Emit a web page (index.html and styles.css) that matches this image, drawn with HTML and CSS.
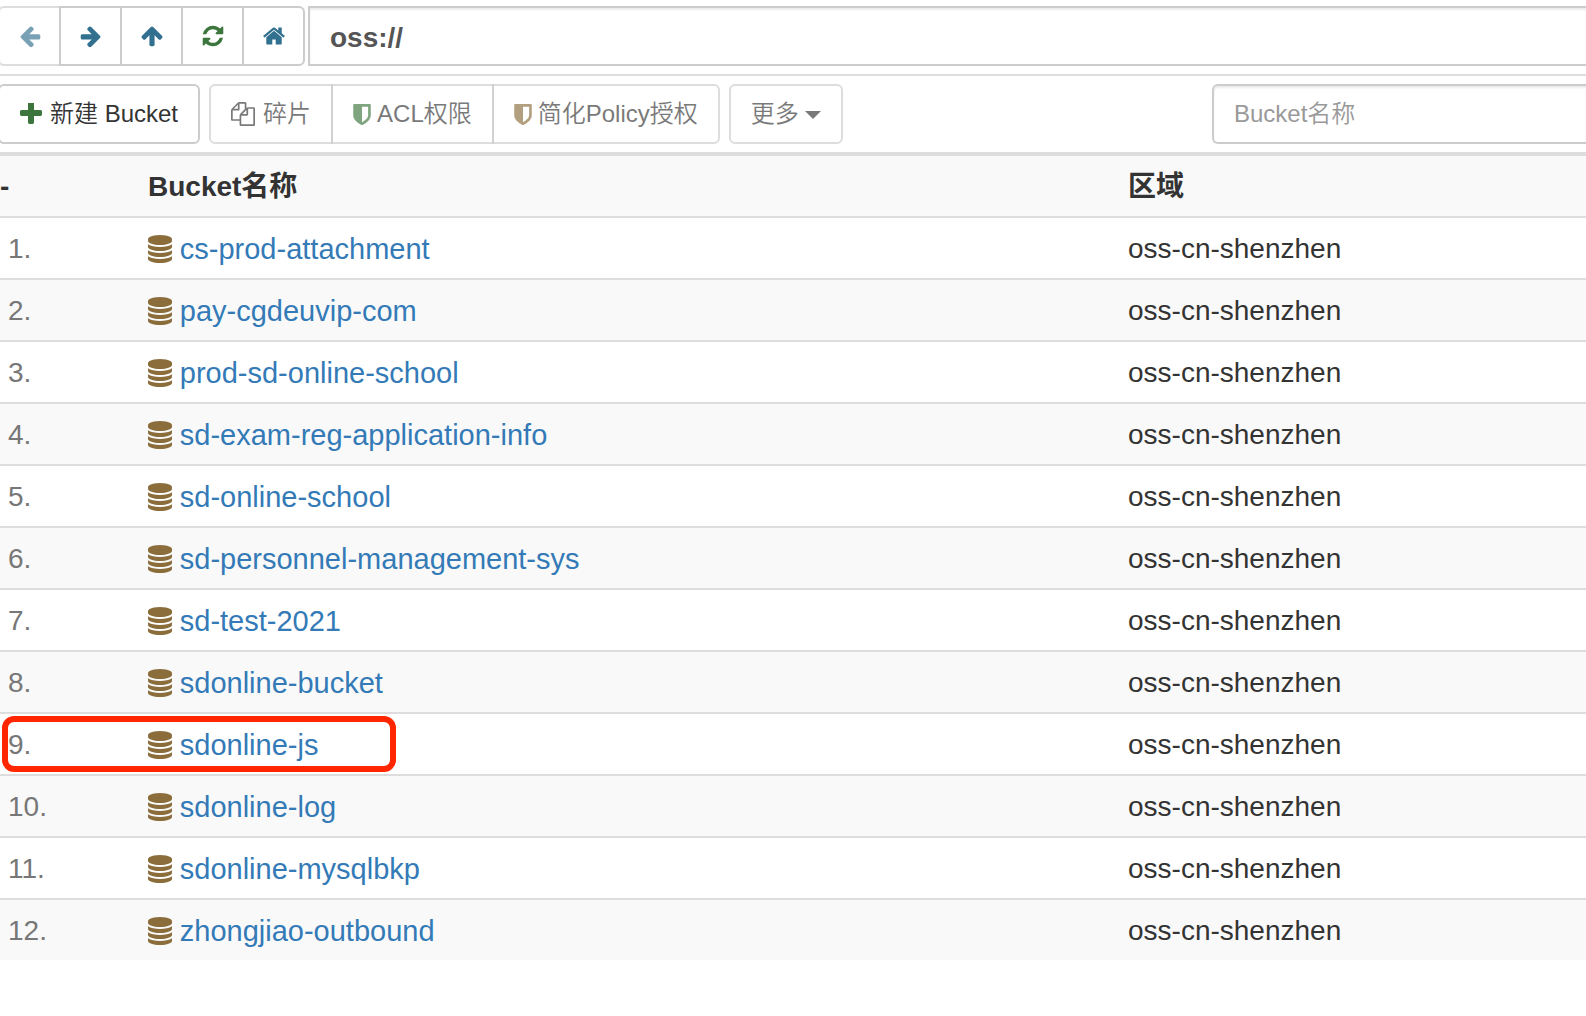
FILE: index.html
```html
<!DOCTYPE html>
<html lang="zh-CN">
<head>
<meta charset="utf-8">
<title>OSS Browser</title>
<link rel="stylesheet" href="styles.css">
</head>
<body>
<svg class="sprite" aria-hidden="true">
  <symbol id="database" viewBox="128 0 1536 1792"><path d="M896 768q237 0 443-43t325-127v170q0 69-103 128t-280 93.500-385 34.500-385-34.500-280-93.500-103-128v-170q119 84 325 127t443 43zm0 768q237 0 443-43t325-127v170q0 69-103 128t-280 93.500-385 34.500-385-34.500-280-93.500-103-128v-170q119 84 325 127t443 43zm0-384q237 0 443-43t325-127v170q0 69-103 128t-280 93.500-385 34.500-385-34.500-280-93.500-103-128v-170q119 84 325 127t443 43zm0-1152q208 0 385 34.500t280 93.500 103 128v128q0 69-103 128t-280 93.500-385 34.500-385-34.500-280-93.500-103-128v-128q0-69 103-128t280-93.500 385-34.500z"/></symbol>
  <symbol id="shield" viewBox="256 128 1280 1536"><path d="M1344 960v-640h-448v1137q119-63 213-137 235-184 235-360zm192-768v768q0 86-33.500 170.500t-83 150-118 127.500-126.500 103-121 77.500-89.500 49.500-42.500 20q-12 6-26 6t-26-6q-16-7-42.500-20t-89.500-49.500-121-77.500-126.500-103-118-127.500-83-150-33.500-170.500v-768q0-26 19-45t45-19h1152q26 0 45 19t19 45z"/></symbol>
</svg>

<nav class="navbar">
  <div class="btn-group">
    <button class="btn nav-btn" type="button" aria-label="后退" disabled>
      <svg class="icon blue" viewBox="0 0 1792 1792"><path d="M1664 896v128q0 53-32.500 90.500t-84.500 37.500h-704l293 294q38 36 38 90t-38 90l-75 76q-37 37-90 37-52 0-91-37l-651-652q-37-37-37-90 0-52 37-91l651-650q38-38 91-38 52 0 90 38l75 74q38 38 38 91t-38 91l-293 293h704q52 0 84.500 37.500t32.500 90.500z"/></svg>
    </button>
    <button class="btn nav-btn" type="button" aria-label="前进">
      <svg class="icon blue" viewBox="0 0 1792 1792"><path d="M1600 960q0 54-37 91l-651 651q-39 37-91 37-51 0-90-37l-75-75q-38-38-38-91t38-91l293-293h-704q-52 0-84.500-37.500t-32.500-90.500v-128q0-53 32.500-90.500t84.500-37.500h704l-293-294q-38-36-38-90t38-90l75-75q38-38 90-38 53 0 91 38l651 651q37 35 37 90z"/></svg>
    </button>
    <button class="btn nav-btn" type="button" aria-label="上一级">
      <svg class="icon blue" viewBox="0 0 1792 1792"><path d="M1675 971q0 51-37 90l-75 75q-38 38-91 38-54 0-90-38l-294-293v704q0 52-37.500 84.500t-90.500 32.500h-128q-53 0-90.500-32.500t-37.500-84.500v-704l-294 293q-36 38-90 38t-90-38l-75-75q-38-38-38-90 0-53 38-91l651-651q35-37 90-37 54 0 91 37l651 651q37 39 37 91z"/></svg>
    </button>
    <button class="btn nav-btn" type="button" aria-label="刷新">
      <svg class="icon green" viewBox="0 0 1792 1792"><path d="M1639 1056q0 5-1 7-64 268-268 434.500t-478 166.500q-146 0-282.500-55t-243.500-157l-129 129q-19 19-45 19t-45-19-19-45v-448q0-26 19-45t45-19h448q26 0 45 19t19 45-19 45l-137 137q71 66 161 102t187 36q134 0 250-65t186-179q11-17 53-117 8-23 30-23h192q13 0 22.500 9.500t9.500 22.500zm25-800v448q0 26-19 45t-45 19h-448q-26 0-45-19t-19-45 19-45l138-138q-148-137-349-137-134 0-250 65t-186 179q-11 17-53 117-8 23-30 23h-199q-13 0-22.500-9.500t-9.500-22.500v-7q65-268 270-434.500t480-166.500q146 0 284 55.500t245 156.500l130-129q19-19 45-19t45 19 19 45z"/></svg>
    </button>
    <button class="btn nav-btn" type="button" aria-label="主页">
      <svg class="icon blue" viewBox="0 0 1792 1792"><path d="M1472 992v480q0 26-19 45t-45 19h-384v-384h-256v384h-384q-26 0-45-19t-19-45v-480q0-1 .5-3t.5-3l575-474 575 474q1 2 1 6zm223-69l-62 74q-8 9-21 11h-3q-13 0-21-7l-692-577-692 577q-12 8-24 7-13-2-21-11l-62-74q-8-10-7-23.500t11-21.500l719-599q32-26 76-26t76 26l244 204v-195q0-14 9-23t23-9h192q14 0 23 9t9 23v408l219 182q10 8 11 21.500t-7 23.500z"/></svg>
    </button>
  </div>
  <input class="field address" type="text" value="oss://" aria-label="地址">
</nav>

<div class="toolbar">
  <button class="btn" type="button">
    <svg class="icon-plus green" viewBox="192 192 1408 1408"><path d="M1600 736v192q0 40-28 68t-68 28h-416v416q0 40-28 68t-68 28h-192q-40 0-68-28t-28-68v-416h-416q-40 0-68-28t-28-68v-192q0-40 28-68t68-28h416v-416q0-40 28-68t68-28h192q40 0 68 28t28 68v416h416q40 0 68 28t28 68z"/></svg>
    <span>新建 Bucket</span>
  </button>
  <div class="btn-group">
    <button class="btn" type="button" disabled>
      <svg class="icon" viewBox="0 0 1792 1792"><path d="M1696 384q40 0 68 28t28 68v1216q0 40-28 68t-68 28h-960q-40 0-68-28t-28-68v-288h-544q-40 0-68-28t-28-68v-672q0-40 20-88t48-76l408-408q28-28 76-48t88-20h416q40 0 68 28t28 68v328q68-40 128-40h416zm-544 213l-299 299h299v-299zm-640-384l-299 299h299v-299zm196 647l316-316v-416h-384v416q0 40-28 68t-68 28h-416v640h512v-256q0-40 20-88t48-76zm956 804v-1152h-384v416q0 40-28 68t-68 28h-416v640h896z"/></svg>
      <span>碎片</span>
    </button>
    <button class="btn btn-tight" type="button" disabled>
      <svg class="icon-shield green"><use href="#shield"/></svg>
      <span>ACL权限</span>
    </button>
    <button class="btn btn-tight" type="button" disabled>
      <svg class="icon-shield brown"><use href="#shield"/></svg>
      <span>简化Policy授权</span>
    </button>
  </div>
  <button class="btn btn-tight" type="button" disabled>
    <span>更多</span>
    <span class="caret"></span>
  </button>
  <input class="field search" type="text" placeholder="Bucket名称" aria-label="Bucket名称">
</div>

<table class="buckets">
  <colgroup><col class="col-index"><col><col class="col-region"></colgroup>
  <thead>
    <tr><th>-</th><th>Bucket名称</th><th>区域</th></tr>
  </thead>
  <tbody>
    <tr><td>1.</td><td><svg class="db"><use href="#database"/></svg> <a href="#">cs-prod-attachment</a></td><td>oss-cn-shenzhen</td></tr>
    <tr><td>2.</td><td><svg class="db"><use href="#database"/></svg> <a href="#">pay-cgdeuvip-com</a></td><td>oss-cn-shenzhen</td></tr>
    <tr><td>3.</td><td><svg class="db"><use href="#database"/></svg> <a href="#">prod-sd-online-school</a></td><td>oss-cn-shenzhen</td></tr>
    <tr><td>4.</td><td><svg class="db"><use href="#database"/></svg> <a href="#">sd-exam-reg-application-info</a></td><td>oss-cn-shenzhen</td></tr>
    <tr><td>5.</td><td><svg class="db"><use href="#database"/></svg> <a href="#">sd-online-school</a></td><td>oss-cn-shenzhen</td></tr>
    <tr><td>6.</td><td><svg class="db"><use href="#database"/></svg> <a href="#">sd-personnel-management-sys</a></td><td>oss-cn-shenzhen</td></tr>
    <tr><td>7.</td><td><svg class="db"><use href="#database"/></svg> <a href="#">sd-test-2021</a></td><td>oss-cn-shenzhen</td></tr>
    <tr><td>8.</td><td><svg class="db"><use href="#database"/></svg> <a href="#">sdonline-bucket</a></td><td>oss-cn-shenzhen</td></tr>
    <tr class="marked"><td>9.</td><td><svg class="db"><use href="#database"/></svg> <a href="#">sdonline-js</a></td><td>oss-cn-shenzhen</td></tr>
    <tr><td>10.</td><td><svg class="db"><use href="#database"/></svg> <a href="#">sdonline-log</a></td><td>oss-cn-shenzhen</td></tr>
    <tr><td>11.</td><td><svg class="db"><use href="#database"/></svg> <a href="#">sdonline-mysqlbkp</a></td><td>oss-cn-shenzhen</td></tr>
    <tr><td>12.</td><td><svg class="db"><use href="#database"/></svg> <a href="#">zhongjiao-outbound</a></td><td>oss-cn-shenzhen</td></tr>
  </tbody>
</table>
</body>
</html>
```
FILE: styles.css
```css
*,
*::after { box-sizing: border-box; }

body {
  margin: 0;
  overflow-x: hidden;
  background: #fff;
  color: #333;
  font-family: "Liberation Sans", "Noto Sans CJK SC", sans-serif;
  font-size: 28px;
  line-height: 40px;
}

.sprite { display: none; }

/* Bars */
.navbar,
.toolbar {
  display: flex;
  margin-left: -2px;
}

.navbar {
  gap: 3px;
  padding: 6px 0 8px;
  border-bottom: 2px solid #ddd;
}

.toolbar {
  gap: 9px;
  padding: 8px 0;
  border-bottom: 4px solid #ddd;
}

/* Buttons */
.btn {
  display: flex;
  align-items: center;
  justify-content: center;
  gap: 8px;
  height: 60px;
  padding: 0 20px;
  border: 2px solid #ccc;
  border-radius: 6px;
  background: #fff;
  color: #333;
  font: 350 24px/34px "Liberation Sans", "Noto Sans CJK SC", sans-serif;
  white-space: nowrap;
}

.btn:disabled { opacity: .65; }
.btn-tight { gap: 6px; }

.nav-btn {
  width: 63px;
  padding: 0;
}

.btn-group { display: flex; }
.btn-group .btn + .btn { margin-left: -2px; }
.btn-group .btn:not(:first-child) { border-top-left-radius: 0; border-bottom-left-radius: 0; }
.btn-group .btn:not(:last-child) { border-top-right-radius: 0; border-bottom-right-radius: 0; }

/* Icons */
svg { flex: none; fill: currentColor; }
.icon { width: 24px; height: 24px; }
.icon-plus { width: 22px; height: 22px; }
.icon-shield { width: 18px; height: 21px; }
.blue { color: #31708f; }
.green { color: #3c763d; }
.brown { color: #8a6d3b; }

.caret {
  margin-top: 2px;
  border-top: 8px solid;
  border-left: 8px solid transparent;
  border-right: 8px solid transparent;
}

/* Text boxes run off the right edge of the window */
.field {
  min-width: 0;
  height: 60px;
  padding: 0 20px;
  border: 2px solid #ccc;
  border-right: 0;
  background: #fff;
  box-shadow: inset 0 2px 2px rgba(0, 0, 0, .075);
  color: #555;
  font-family: inherit;
}

.address {
  flex: 1;
  padding-top: 3px;
  border-radius: 0;
  font-size: 28px;
  font-weight: 700;
}

.search {
  width: 374px;
  margin-left: auto;
  border-radius: 6px 0 0 6px;
  font-size: 24px;
  font-weight: 350;
}

.search::placeholder { color: #999; opacity: 1; }

/* Bucket list */
.buckets {
  width: 100%;
  table-layout: fixed;
  border-collapse: separate;
  border-spacing: 0;
}

.col-index { width: 148px; }
.col-region { width: 458px; }

th,
td {
  height: 60px;
  padding: 11px 0 7px;
  text-align: left;
  white-space: nowrap;
  vertical-align: top;
}

th { font-weight: 700; }
thead tr,
tbody tr:nth-child(even) { background: #f9f9f9; }

td {
  height: 62px;
  border-top: 2px solid #ddd;
}

td:first-child {
  padding-left: 8px;
  color: #777;
}

.buckets a {
  color: #337ab7;
  font-size: 29px;
  text-decoration: none;
}

.db {
  width: 24px;
  height: 28px;
  color: #8a6d3b;
  vertical-align: -4px;
}

/* Red frame drawn over the marked row */
.marked td:first-child { position: relative; }

.marked td:first-child::after {
  content: "";
  position: absolute;
  top: 2px;
  left: 2px;
  width: 394px;
  height: 56px;
  border: 6px solid #ff2600;
  border-radius: 12px;
  pointer-events: none;
}
```
